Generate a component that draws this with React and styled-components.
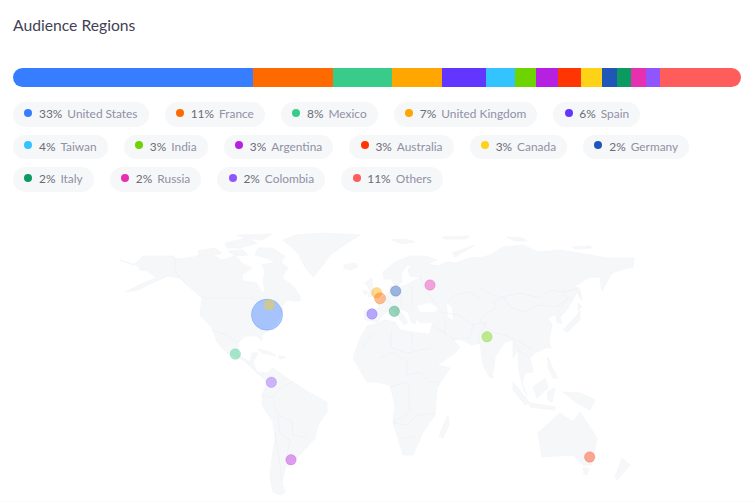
import React from 'react';
import styled, { createGlobalStyle } from 'styled-components';

const regions = [
  { pct: 33, name: 'United States', color: '#377dff', width: 240 },
  { pct: 11, name: 'France', color: '#ff6a00', width: 80 },
  { pct: 8, name: 'Mexico', color: '#38cb89', width: 58.7 },
  { pct: 7, name: 'United Kingdom', color: '#ffa600', width: 50.6 },
  { pct: 6, name: 'Spain', color: '#6236ff', width: 43.4 },
  { pct: 4, name: 'Taiwan', color: '#33c4ff', width: 29.3 },
  { pct: 3, name: 'India', color: '#6dd400', width: 21.3 },
  { pct: 3, name: 'Argentina', color: '#b620e0', width: 22 },
  { pct: 3, name: 'Australia', color: '#ff3503', width: 22.7 },
  { pct: 3, name: 'Canada', color: '#fed217', width: 21.3 },
  { pct: 2, name: 'Germany', color: '#1f56b8', width: 14.7 },
  { pct: 2, name: 'Italy', color: '#0b9a5f', width: 14.3 },
  { pct: 2, name: 'Russia', color: '#e730b0', width: 14.4 },
  { pct: 2, name: 'Colombia', color: '#9155fd', width: 14.3 },
  { pct: 11, name: 'Others', color: '#ff5c5c', width: 81 },
];

const land = [
  // americas
  '120,260 133,265 138,261 143,256 173,256 177,259 195,257 202,253 215,256 222,260 235,256 242,263 252,268 242,275 243,281 257,283 262,293 265,291 263,281 265,271 262,265 272,263 280,262 288,268 282,278 292,285 300,296 300,301 287,300 282,306 283,311 275,325 262,335 262,341 257,336 245,336 238,343 238,353 243,358 250,362 252,353 258,353 253,362 257,372 267,373 273,368 290,380 310,393 327,402 327,412 318,425 315,438 307,447 297,458 285,468 282,482 285,492 281,495 273,492 270,478 272,458 275,438 273,422 262,405 262,395 267,382 257,373 243,360 227,353 217,342 212,328 200,315 202,298 187,285 180,278 168,276 152,283 138,290 125,292 148,281 157,278 147,271 140,270 137,265',
  // greenland, iceland
  '283,240 297,235 323,233 360,235 347,243 340,248 330,255 323,265 313,277 305,267 298,253',
  '344,265 356,263 358,267 350,270 344,268',
  // canadian arctic
  '258,248 272,248 285,256 280,265 267,258 255,255',
  '198,251 215,248 222,253 210,256 200,256',
  '225,243 247,238 257,243 240,248 227,248',
  '228,251 243,250 248,255 235,256',
  '237,235 272,234 262,240 245,238',
  '292,296 301,300 293,301',
  // eurasia
  '365,320 364,311 372,308 380,309 376,300 385,296 390,290 391,285 393,288 398,288 408,284 415,280 422,278 410,276 408,270 412,264 406,266 401,274 402,282 396,287 391,279 384,279 383,272 395,262 410,256 425,256 437,260 428,264 438,266 446,262 455,263 470,258 483,257 490,255 503,247 523,245 538,252 560,250 573,252 607,258 634,258 633,267 627,268 612,273 602,291 600,277 590,277 573,287 579,288 580,298 577,292 567,310 560,317 562,323 557,323 556,314 548,318 552,325 550,335 548,347 535,353 530,358 533,372 525,373 522,383 527,395 524,390 519,372 518,350 513,358 513,340 505,342 495,357 493,373 490,378 483,365 480,343 472,345 462,340 453,339 460,347 455,353 442,362 437,365 428,340 430,332 433,322 420,323 417,318 415,324 411,322 408,312 403,310 398,308 408,322 404,325 398,316 392,309 386,312 382,316 378,322',
  // africa
  '368,325 372,325 385,320 395,322 400,330 412,332 428,334 437,365 450,368 437,388 435,415 423,432 413,455 403,455 393,422 395,405 390,385 377,382 367,382 353,358 360,338',
  '439,436 448,415 449,425 443,438',
  // british isles
  '365,283 372,278 373,290 375,295 368,297 370,290',
  '363,290 368,292 365,295',
  // asia pacific
  '513,382 530,403 525,405 513,390',
  '530,403 555,407 555,410 530,407',
  '533,387 545,378 548,388 537,398',
  '547,392 555,388 552,402 548,400',
  '548,357 552,367 558,378 553,378 548,367',
  '549,343 551,348 548,348',
  '563,392 580,393 595,400 590,410 577,403',
  '563,330 577,315 580,310 580,320 568,332',
  '578,303 582,307 578,310',
  '580,290 582,300 579,297',
  '492,375 493,378 491,378',
  // polar scraps
  '392,240 405,239 415,242 402,244',
  '442,237 470,236 465,239 445,239',
  '507,237 523,238 527,241 515,241',
  '572,247 590,246 592,248 575,249',
  '452,253 475,245 465,251 455,257',
  // caribbean
  '258,349 270,352 276,356 262,353',
  '278,356 286,357 280,359',
  // australia, tasmania, new zealand
  '538,433 560,413 573,422 580,412 597,438 592,465 583,465 573,455 542,457',
  '583,468 589,468 587,475 584,474',
  '622,458 630,465 617,480 615,477',
];

const water = [
  '417,306 430,303 438,308 435,312 420,312',
  '447,303 452,308 453,320 448,317',
];

const borders = [
  // north america
  'M202 298 L252 298 L262 303 L278 300',
  'M175 259 L176 273 L187 285',
  'M212 330 L227 335 L238 343',
  // south america
  'M262 395 L273 398 L280 388 L293 382',
  'M273 402 L278 415 L292 422 L293 435 L307 438',
  'M275 432 L280 465 L282 482',
  'M278 415 L280 433 L290 440 L287 455',
  // africa
  'M390 335 L392 348 L407 353 L430 348',
  'M380 358 L393 352 L407 362 L407 375 L420 372 L428 382 L437 382',
  'M390 387 L408 382 L410 412 L393 423 L407 425 L417 415 L435 413',
  'M400 438 L415 437',
  'M375 332 L362 347 M392 330 L390 343 M412 332 L412 350',
  // europe and asia
  'M420 275 L425 290 L437 305',
  'M448 302 L455 295 L470 292 L482 300',
  'M480 288 L493 295 L503 297 L520 293 L540 298 L550 290 L562 292 L568 298 L557 307 L538 305 L525 312 L510 307 L503 297',
  'M562 292 L572 290 L578 288 M568 298 L558 312',
  'M503 297 L493 303 L497 307 L483 315 L480 322 L493 332 L513 338 L533 350',
  'M440 312 L458 315 L473 325 L470 338 L462 338 M445 318 L445 333',
  'M433 327 L445 333 L455 340 M473 325 L487 322 L478 335 L480 343',
  'M385 300 L398 308 M400 288 L402 308 M412 285 L412 310 M385 312 L390 305',
  'M518 350 L530 358 M513 340 L520 352',
];

const bubbles = [
  { cx: 267, cy: 314.7, r: 15.6, color: '#377dff' },
  { cx: 269.3, cy: 304.7, r: 5.2, color: '#fed217' },
  { cx: 235.3, cy: 354, r: 5.2, color: '#38cb89' },
  { cx: 271.3, cy: 382.3, r: 5.2, color: '#9155fd' },
  { cx: 291, cy: 459.7, r: 5.2, color: '#b620e0' },
  { cx: 372, cy: 314, r: 5.2, color: '#6236ff' },
  { cx: 376.7, cy: 292.7, r: 5.2, color: '#ffa600' },
  { cx: 380, cy: 298.3, r: 5.6, color: '#ff6a00' },
  { cx: 395.7, cy: 291, r: 5.2, color: '#1f56b8' },
  { cx: 394.3, cy: 311.3, r: 5.2, color: '#0b9a5f' },
  { cx: 430, cy: 285, r: 5.2, color: '#e730b0' },
  { cx: 487, cy: 336.7, r: 5.2, color: '#6dd400' },
  { cx: 589.7, cy: 457, r: 5.2, color: '#ff3503' },
];

const GlobalStyle = createGlobalStyle`
  html, body {
    margin: 0;
    background: #fff;
  }
  body {
    font-family: Lato, "Open Sans", sans-serif;
  }
`;

const Page = styled.div`
  width: 755px;
  height: 502px;
  box-sizing: border-box;
  padding: 16px 14px 0 13px;
  border-bottom: 1px solid #fafafb;
  overflow: hidden;
`;

const Title = styled.h2`
  margin: 0;
  font-size: 15.7px;
  line-height: 19px;
  font-weight: 400;
  color: #414154;
`;

const Bar = styled.div`
  display: flex;
  height: 19px;
  margin-top: 33px;
  border-radius: 10px;
  overflow: hidden;
`;

const Segment = styled.div`
  flex: ${(p) => p.$share} 0 0;
  background: ${(p) => p.$color};
`;

const Legend = styled.div`
  display: flex;
  flex-wrap: wrap;
  gap: 8px 16px;
  margin-top: 15px;
`;

const Chip = styled.div`
  display: flex;
  align-items: center;
  height: 24.5px;
  box-sizing: border-box;
  padding: 0 11.2px 1px 11.2px;
  border-radius: 13px;
  background: #f6f7f9;
  font-size: 11.9px;
`;

const Dot = styled.span`
  width: 8px;
  height: 8px;
  margin: -2px 6.8px 0 0;
  border-radius: 50%;
  background: ${(p) => p.$color};
`;

const Pct = styled.span`
  margin-right: 5px;
  color: #6a6c76;
`;

const Name = styled.span`
  color: #8f90a6;
`;

const MapArt = styled.svg`
  display: block;
  width: 540px;
  height: 275px;
  margin: 33.5px 0 0 97px;
`;

export default function App() {
  return (
    <>
      <GlobalStyle />
      <Page>
        <Title>Audience Regions</Title>
        <Bar>
          {regions.map((r) => (
            <Segment key={r.name} $share={r.width} $color={r.color} />
          ))}
        </Bar>
        <Legend>
          {regions.map((r) => (
            <Chip key={r.name}>
              <Dot $color={r.color} />
              <Pct>{r.pct}%</Pct>
              <Name>{r.name}</Name>
            </Chip>
          ))}
        </Legend>
        <MapArt viewBox="110 225 540 275">
          {land.map((points) => (
            <polygon key={points} points={points} fill="#f6f7f9" stroke="#f4f5f8" strokeLinejoin="round" strokeWidth="0.8" />
          ))}
          {water.map((points) => (
            <polygon key={points} points={points} fill="#fff" />
          ))}
          {borders.map((d) => (
            <path key={d} d={d} fill="none" stroke="#eeeff3" strokeLinejoin="round" strokeWidth="0.7" />
          ))}
          {bubbles.map((b) => (
            <circle key={b.cx} cx={b.cx} cy={b.cy} r={b.r} fill={b.color} fillOpacity="0.42" stroke={b.color} strokeOpacity="0.25" strokeWidth="1" />
          ))}
        </MapArt>
      </Page>
    </>
  );
}
